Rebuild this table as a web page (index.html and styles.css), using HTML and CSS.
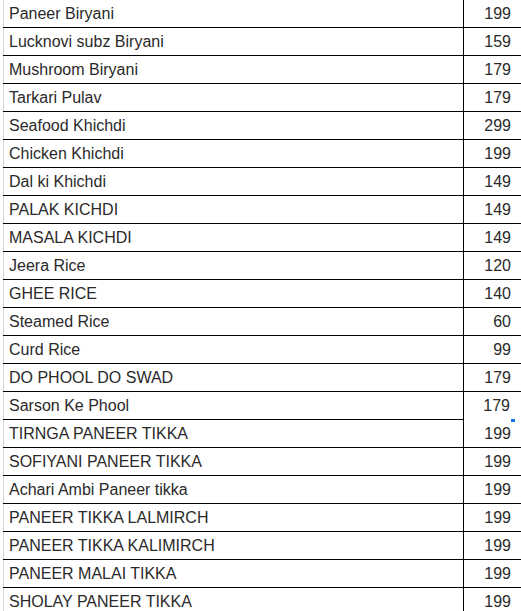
FILE: index.html
```html
<!DOCTYPE html>
<html>
<head>
<meta charset="utf-8">
<link rel="stylesheet" href="styles.css">
</head>
<body>
<table class="menu">
<tbody>
<tr><td class="name">Paneer Biryani</td><td class="price">199</td></tr>
<tr><td class="name">Lucknovi subz Biryani</td><td class="price">159</td></tr>
<tr><td class="name">Mushroom Biryani</td><td class="price">179</td></tr>
<tr><td class="name">Tarkari Pulav</td><td class="price">179</td></tr>
<tr><td class="name">Seafood Khichdi</td><td class="price">299</td></tr>
<tr><td class="name">Chicken Khichdi</td><td class="price">199</td></tr>
<tr><td class="name">Dal ki Khichdi</td><td class="price">149</td></tr>
<tr><td class="name">PALAK KICHDI</td><td class="price">149</td></tr>
<tr><td class="name">MASALA KICHDI</td><td class="price">149</td></tr>
<tr><td class="name">Jeera Rice</td><td class="price">120</td></tr>
<tr><td class="name">GHEE RICE</td><td class="price">140</td></tr>
<tr><td class="name">Steamed Rice</td><td class="price">60</td></tr>
<tr><td class="name">Curd Rice</td><td class="price">99</td></tr>
<tr><td class="name">DO PHOOL DO SWAD</td><td class="price">179</td></tr>
<tr><td class="name">Sarson Ke Phool</td><td class="price selected">179<span class="handle"></span></td></tr>
<tr><td class="name">TIRNGA PANEER TIKKA</td><td class="price">199</td></tr>
<tr><td class="name">SOFIYANI PANEER TIKKA</td><td class="price">199</td></tr>
<tr><td class="name">Achari Ambi Paneer tikka</td><td class="price">199</td></tr>
<tr><td class="name">PANEER TIKKA LALMIRCH</td><td class="price">199</td></tr>
<tr><td class="name">PANEER TIKKA KALIMIRCH</td><td class="price">199</td></tr>
<tr><td class="name">PANEER MALAI TIKKA</td><td class="price">199</td></tr>
<tr><td class="name">SHOLAY PANEER TIKKA</td><td class="price">199</td></tr>
</tbody>
</table>
</body>
</html>
```
FILE: styles.css
```css
html, body {
  margin: 0;
  padding: 0;
  background: #fff;
  overflow: hidden;
}
body {
  font-family: "Liberation Sans", Arial, sans-serif;
  font-size: 16px;
  color: #2a2a2a;
}
.menu {
  margin-left: 3px;
  border-collapse: collapse;
  table-layout: fixed;
  width: 518px;
}
.menu td {
  height: 27px;
  padding: 0;
  border-bottom: 1px solid #000;
  vertical-align: middle;
  white-space: nowrap;
  line-height: 18px;
}
.name {
  width: 454px;
  padding-left: 5px !important;
  border-left: 1px solid #d6d6d6;
  border-right: 1px solid #000;
}
.price {
  text-align: right;
  padding-right: 10px !important;
}
.selected {
  position: relative;
  border-bottom-color: transparent !important;
  padding-right: 11px !important;
}
.handle {
  position: absolute;
  right: 6px;
  bottom: -3px;
  width: 4px;
  height: 3px;
  background: #1a73e8;
}
```
